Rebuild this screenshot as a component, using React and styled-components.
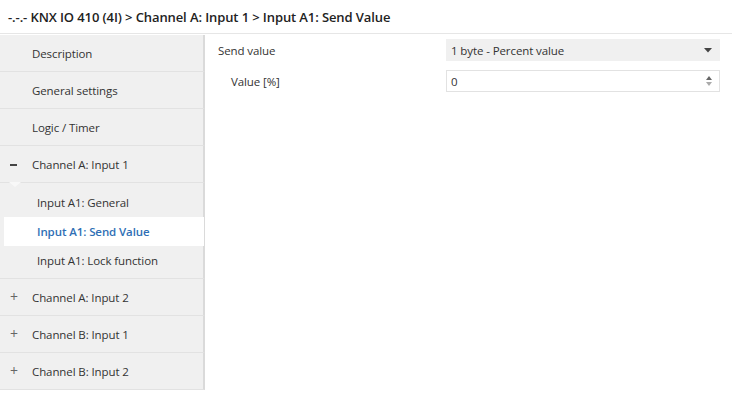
import styled, { createGlobalStyle } from 'styled-components';

const GlobalStyle = createGlobalStyle`
  html, body {
    margin: 0;
    padding: 0;
    background: #ffffff;
  }
  body {
    font-family: "Open Sans", "Noto Sans", "Liberation Sans", sans-serif;
    color: #333333;
  }
`;

const Page = styled.div`
  width: 732px;
  height: 394px;
  display: flex;
  flex-direction: column;
  overflow: hidden;
`;

const Header = styled.div`
  height: 33px;
  display: flex;
  align-items: center;
  padding-left: 8px;
  font-size: 13px;
  font-weight: 600;
  color: #222222;
  border-bottom: 1px solid #e6e6e6;
  letter-spacing: -0.1px;
`;

const Body = styled.div`
  flex: 1;
  display: flex;
  min-height: 0;
`;

const Sidebar = styled.div`
  width: 205px;
  padding-top: 1px;
  display: flex;
  flex-direction: column;
`;

const Row = styled.div`
  position: relative;
  height: ${(p) => (p.$sub ? 29 : 36)}px;
  display: flex;
  align-items: center;
  font-size: 11.5px;
  background: ${(p) => (p.$active ? '#ffffff' : '#f0f0f0')};
  color: ${(p) => (p.$active ? '#2f6fb5' : '#333333')};
  font-weight: ${(p) => (p.$active ? 600 : 400)};
  border-right: 2px solid ${(p) => (p.$active ? '#ffffff' : '#dadada')};
  border-bottom: ${(p) => (p.$sub ? 'none' : '1px solid #e2e2e2')};
  margin-left: ${(p) => (p.$active ? 4 : 0)}px;
  margin-right: ${(p) => (p.$active ? -1 : 0)}px;
  padding-left: ${(p) => (p.$sub ? (p.$active ? 33 : 37) : 32)}px;
  letter-spacing: -0.1px;
`;

const Minus = styled.span`
  position: absolute;
  left: 10px;
  top: 50%;
  width: 7px;
  height: 1.5px;
  background: #444444;
`;

const Plus = styled.span`
  position: absolute;
  left: 10px;
  top: 50%;
  transform: translateY(-50%);
  font-size: 14px;
  color: #666666;
  line-height: 1;
`;

const Group = styled.div`
  position: relative;
  background: #f0f0f0;
  border-right: 2px solid #dadada;
  border-bottom: 1px solid #e2e2e2;
  padding: 5px 0 3px;
  display: flex;
  flex-direction: column;
`;

const SubRow = styled(Row)`
  border-right: none;
`;

const Notch = styled.span`
  position: absolute;
  left: 9px;
  top: -1px;
  width: 0;
  height: 0;
  border-left: 6px solid transparent;
  border-right: 6px solid transparent;
  border-top: 5px solid #f8f8f8;
`;

const Content = styled.div`
  flex: 1;
  padding: 5px 12px 0 13px;
  display: flex;
  flex-direction: column;
  gap: 9px;
`;

const FieldRow = styled.div`
  display: flex;
  align-items: center;
  height: 22px;
`;

const Label = styled.div`
  width: ${(p) => (p.$indent ? 215 : 228)}px;
  padding-left: ${(p) => (p.$indent ? 13 : 0)}px;
  font-size: 11.5px;
  color: #333333;
  letter-spacing: -0.1px;
`;

const Select = styled.div`
  flex: 1;
  height: 22px;
  background: #f0f0f0;
  display: flex;
  align-items: center;
  justify-content: space-between;
  padding: 0 8px 0 5px;
  font-size: 11.5px;
  box-sizing: border-box;
  letter-spacing: -0.1px;
`;

const Input = styled.div`
  flex: 1;
  height: 22px;
  background: #ffffff;
  border: 1px solid #e2e2e2;
  display: flex;
  align-items: center;
  justify-content: space-between;
  padding: 0 7px 0 4px;
  font-size: 11.5px;
  box-sizing: border-box;
`;

const Spinner = styled.div`
  display: flex;
  flex-direction: column;
  gap: 2px;
`;

const Caret = () => (
  <svg width="8" height="5" viewBox="0 0 8 5">
    <path d="M0 0 L8 0 L4 4.5 Z" fill="#444" />
  </svg>
);

const Up = () => (
  <svg width="6" height="4" viewBox="0 0 6 4">
    <path d="M0 4 L6 4 L3 0 Z" fill="#666" />
  </svg>
);

const Down = () => (
  <svg width="6" height="4" viewBox="0 0 6 4">
    <path d="M0 0 L6 0 L3 4 Z" fill="#aaa" />
  </svg>
);

const App = () => (
  <Page>
    <GlobalStyle />
    <Header>-.-.- KNX IO 410 (4I) &gt; Channel A: Input 1 &gt; Input A1: Send Value</Header>
    <Body>
      <Sidebar>
        <Row>Description</Row>
        <Row>General settings</Row>
        <Row>Logic / Timer</Row>
        <Row>
          <Minus />
          Channel A: Input 1
        </Row>
        <Group>
          <Notch />
          <SubRow $sub>Input A1: General</SubRow>
          <SubRow $sub $active>Input A1: Send Value</SubRow>
          <SubRow $sub>Input A1: Lock function</SubRow>
        </Group>
        <Row>
          <Plus>+</Plus>
          Channel A: Input 2
        </Row>
        <Row>
          <Plus>+</Plus>
          Channel B: Input 1
        </Row>
        <Row>
          <Plus>+</Plus>
          Channel B: Input 2
        </Row>
      </Sidebar>
      <Content>
        <FieldRow>
          <Label>Send value</Label>
          <Select>
            1 byte - Percent value
            <Caret />
          </Select>
        </FieldRow>
        <FieldRow>
          <Label $indent>Value [%]</Label>
          <Input>
            0
            <Spinner>
              <Up />
              <Down />
            </Spinner>
          </Input>
        </FieldRow>
      </Content>
    </Body>
  </Page>
);

export default App;
